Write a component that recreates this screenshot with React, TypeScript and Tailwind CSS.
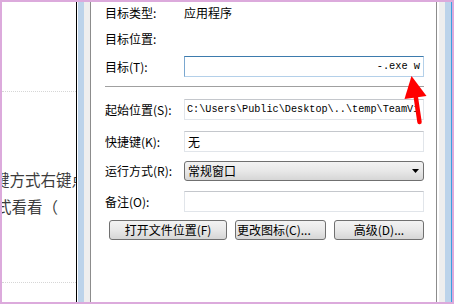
import React from "react";

const cjk = "font-['Noto_Sans_CJK_SC',sans-serif]";
const mono = "font-['Liberation_Mono','Noto_Sans_CJK_SC',monospace]";

const Field = ({ children, focused = false }: { children?: React.ReactNode; focused?: boolean }) => (
  <div
    className={`flex h-[21px] w-[240px] items-center overflow-hidden whitespace-nowrap border bg-white ${
      focused ? "border-[#b4d0e9] border-t-[#3d7bad] border-l-[#7aa7cf]" : "border-[#e1e5ea] border-t-[#c4c7cc]"
    }`}
  >
    {children}
  </div>
);

const Btn = ({ children, className = "" }: { children: React.ReactNode; className?: string }) => (
  <div
    className={`flex h-[20px] items-center overflow-hidden whitespace-nowrap rounded-[3px] border border-[#707070] bg-linear-to-b from-[#f3f3f3] via-[#e8e8e8] to-[#d6d6d6] text-[12px] leading-none text-black ${className}`}
  >
    {children}
  </div>
);

const Row = ({ label, children, className = "" }: { label: string; children: React.ReactNode; className?: string }) => (
  <div className={`flex items-center ${className}`}>
    <div className="w-[79px] text-[12px] leading-none text-black">{label}</div>
    {children}
  </div>
);

export default function App() {
  return (
    <div className={`relative flex h-[304px] w-[454px] bg-[#dcaadc] pb-[2px] pl-[2px] pr-[2px] pt-[2px] ${cjk}`}>
      {/* article behind the dialog */}
      <div className="flex w-[74px] flex-col overflow-hidden bg-white">
        <div className="mt-[89px] border-t border-dotted border-[#d6d6d6]" />
        <div className="ml-[-8px] mt-[74px] whitespace-nowrap text-[15.5px] leading-[27px] text-[#3c3c3c]">键方式右键点</div>
        <div className="ml-[-6px] whitespace-nowrap text-[15.5px] leading-[27px] text-[#3c3c3c]">式看看（</div>
        <div className="mt-[62px] border-t border-dotted border-[#d6d6d6]" />
      </div>

      {/* left window frame */}
      <div className="w-px bg-black" />
      <div className="w-px bg-white" />
      <div className="w-[6px] bg-[#bcd3ea]" />
      <div className="w-[6px] bg-[#eeeeee]" />
      <div className="w-px bg-[#8c8c8c]" />

      {/* dialog */}
      <div className="flex w-[345px] flex-col bg-white pl-[14px] pt-[3px]">
        <Row label="目标类型:" className="h-[16px]">
          <span className="text-[12px] leading-none">应用程序</span>
        </Row>
        <Row label="目标位置:" className="mt-[10px] h-[16px]">
          <span />
        </Row>
        <Row label="目标(T):" className="mt-[9px]">
          <Field focused>
            <span className={`w-full pr-[3px] text-right text-[10.3px] ${mono}`}>-.exe w</span>
          </Field>
        </Row>
        <div className="mt-[9px] h-px w-[319px] bg-[#a0a0a0]" />
        <div className="h-px w-[319px] bg-white" />
        <Row label="起始位置(S):" className="mt-[11px]">
          <Field>
            <span className={`pl-[2px] text-[10.2px] ${mono}`}>{"C:\\Users\\Public\\Desktop\\..\\temp\\TeamVi"}</span>
          </Field>
        </Row>
        <Row label="快捷键(K):" className="mt-[11px]">
          <Field>
            <span className="pl-[3px] text-[12px] leading-none">无</span>
          </Field>
        </Row>
        <Row label="运行方式(R):" className="mt-[9px]">
          <Btn className="w-[240px] justify-between pl-[3px] pr-[4px]">
            <span>常规窗口</span>
            <svg width="7" height="4" viewBox="0 0 7 4">
              <path d="M0 0h7L3.5 4z" fill="#000" />
            </svg>
          </Btn>
        </Row>
        <Row label="备注(O):" className="mt-[10px]">
          <Field />
        </Row>
        <div className="mt-[8px] flex gap-[8px] pl-[4px]">
          <Btn className="w-[118px] justify-center">打开文件位置(F)</Btn>
          <Btn className="w-[91px] pl-[1px]">更改图标(C)...</Btn>
          <Btn className="w-[90px] justify-center">高级(D)...</Btn>
        </div>
      </div>

      {/* right window frame */}
      <div className="w-px bg-[#8c8c8c]" />
      <div className="w-[2px] bg-white" />
      <div className="w-[6px] bg-[#eeeeee]" />
      <div className="w-[6px] bg-[#bcd3ea]" />
      <div className="w-px bg-[#3aa0e0]" />

      {/* red annotation arrow */}
      <svg className="absolute left-[400px] top-[70px]" width="32" height="56" viewBox="0 0 32 56">
        <path d="M11.5 6 L4.5 29 L26.5 26 Z" fill="#ff0000" />
        <path d="M15.5 25 L19.5 52" stroke="#ff0000" strokeWidth="4.5" strokeLinecap="round" />
      </svg>
    </div>
  );
}
